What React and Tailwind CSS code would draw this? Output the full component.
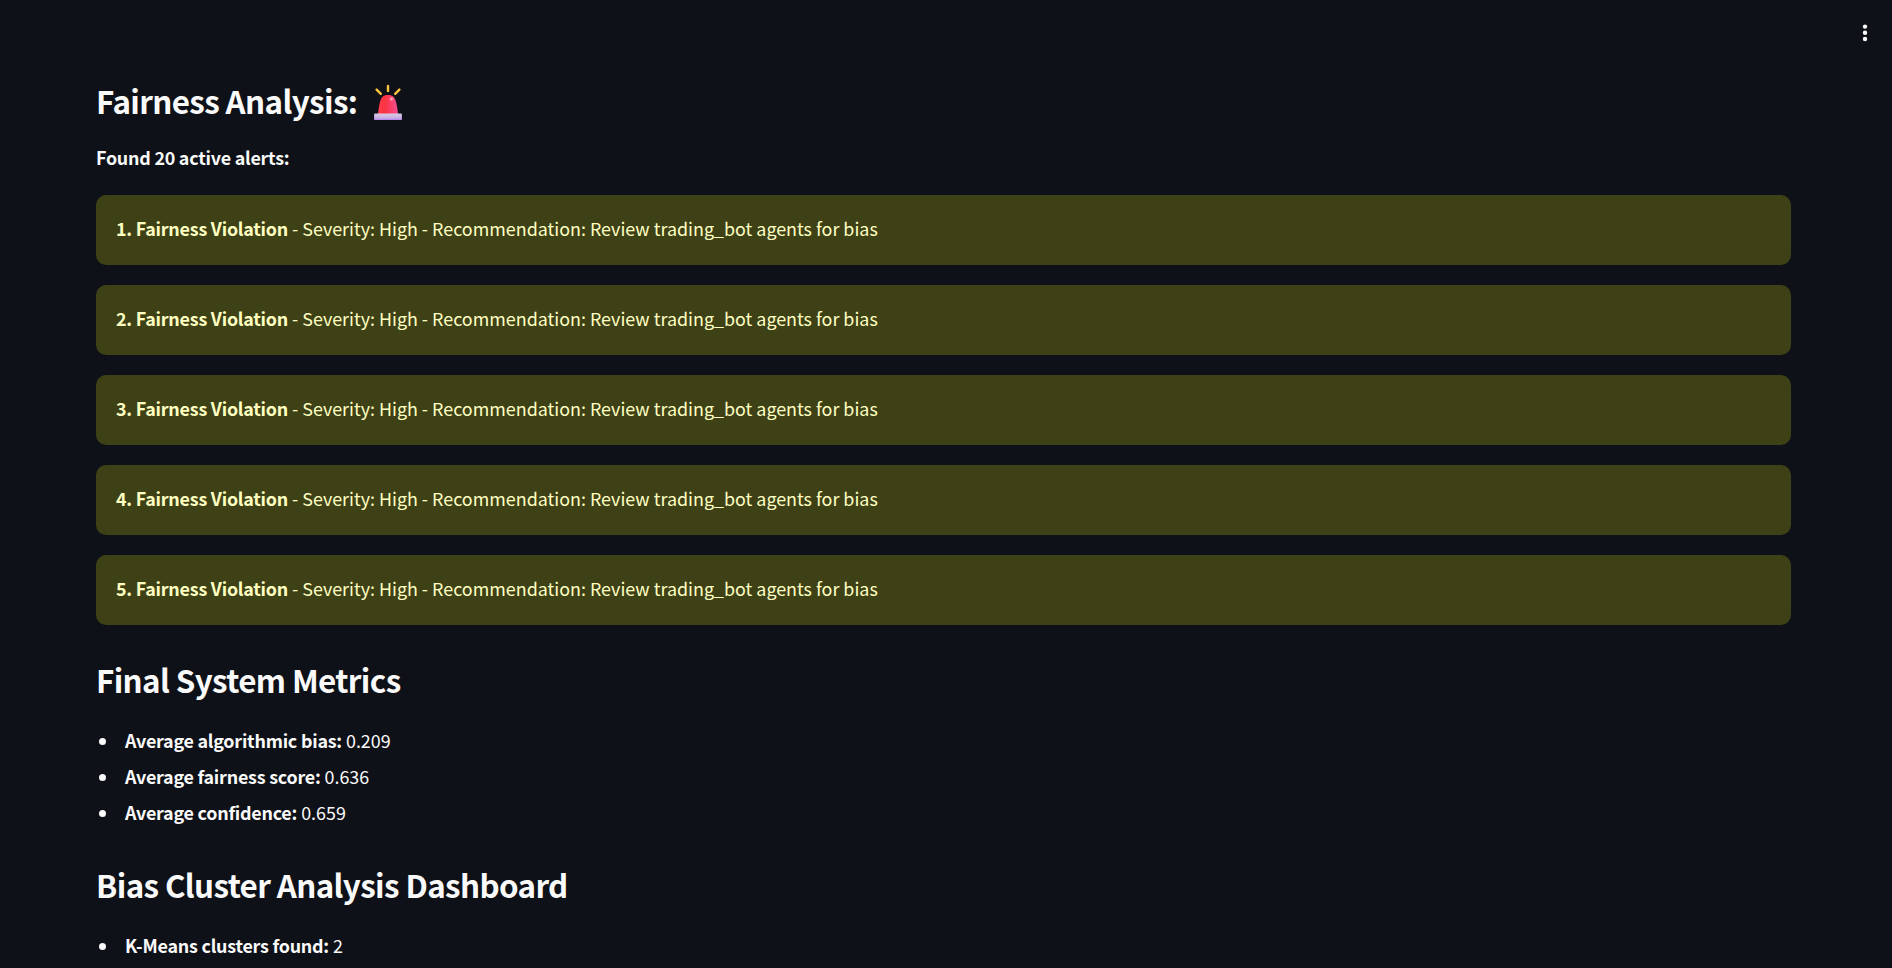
const alerts = [1, 2, 3, 4, 5];

const metrics = [
  ["Average algorithmic bias:", "0.209"],
  ["Average fairness score:", "0.636"],
  ["Average confidence:", "0.659"],
];

function Siren() {
  return (
    <svg viewBox="0 0 28 36" className="h-9 w-7" aria-hidden="true">
      <defs>
        <linearGradient id="dome" x1="0" x2="1">
          <stop offset="0" stopColor="#ff3b4e" />
          <stop offset="0.35" stopColor="#fb3340" />
          <stop offset="1" stopColor="#f54d94" />
        </linearGradient>
        <linearGradient id="base" x1="0" x2="0" y1="0" y2="1">
          <stop offset="0" stopColor="#dccbe8" />
          <stop offset="0.65" stopColor="#c8b4e2" />
          <stop offset="1" stopColor="#b57ff0" />
        </linearGradient>
        <radialGradient id="shine">
          <stop offset="0" stopColor="#ffd0d8" />
          <stop offset="1" stopColor="#ff8296" stopOpacity="0" />
        </radialGradient>
      </defs>
      <g stroke="#f9c23c" strokeWidth="2.4" strokeLinecap="round">
        <path d="M14 1.9v5" />
        <path d="M2.6 5.6l4.2 4.2" />
        <path d="M25.4 5.6l-4.2 4.2" />
      </g>
      <path d="M4 30C4.5 25 5.2 20 6.6 16 8 12.2 10.5 11 14 11s6 1.2 7.4 5C22.8 20 23.5 25 24 30z" fill="url(#dome)" />
      <ellipse cx="17.5" cy="15" rx="2.8" ry="2.6" fill="url(#shine)" />
      <path d="M1.3 29.5h25.4q1.2 0 1.2 1.2V36H.1v-5.3q0-1.2 1.2-1.2z" fill="url(#base)" />
    </svg>
  );
}

function Heading({ children }) {
  return (
    <h3 className="flex h-[43px] items-center whitespace-nowrap text-[31.35px] leading-[43px] font-semibold tracking-[-0.62px]">
      {children}
    </h3>
  );
}

function Strong({ children }) {
  return <strong className="font-semibold tracking-[-0.23px]">{children}</strong>;
}

function Item({ label, value }) {
  return (
    <li className="flex h-9 items-center whitespace-nowrap">
      <span className="mt-[3px] mr-[19px] ml-[3px] size-[7px] rounded-full bg-[#fafafa]" />
      <span className="leading-8">
        <Strong>{label}</Strong> {value}
      </span>
    </li>
  );
}

export default function App() {
  return (
    <div className="flex h-[968px] flex-col overflow-hidden bg-[#0e1117] font-['Noto_Sans_CJK_JP','Noto_Sans_CJK_SC',sans-serif] text-[17.9px] text-[#fafafa]">
      <header className="flex h-[65px] shrink-0 items-center justify-end pr-[18.5px]">
        <button aria-label="Menu" className="flex h-6 w-[18px] items-center justify-center">
          <svg viewBox="0 0 6 18" className="h-[18px] w-1.5 fill-[#fafafa]">
            <circle cx="3" cy="2.6" r="2.2" />
            <circle cx="3" cy="8.8" r="2.2" />
            <circle cx="3" cy="15" r="2.2" />
          </svg>
        </button>
      </header>
      <main className="flex flex-col pt-[14px] pr-[101px] pl-24">
        <Heading>
          <span>Fairness Analysis:</span>
          <span className="mt-0.5 ml-[17px]">
            <Siren />
          </span>
        </Heading>
        <p className="mt-[19px] h-8 leading-8">
          <Strong>Found 20 active alerts:</Strong>
        </p>
        <div className="mt-[22px] flex flex-col gap-5">
          {alerts.map((n) => (
            <div key={n} className="h-[70px] rounded-[10px] bg-[#3e4116] px-5 pt-[17px] leading-8 text-[#ffffc2]">
              <Strong>{n}. Fairness Violation</Strong> - Severity: High - Recommendation: Review trading_bot agents for
              bias
            </div>
          ))}
        </div>
        <div className="mt-[33px]">
          <Heading>Final System Metrics</Heading>
        </div>
        <ul className="mt-[21px]">
          {metrics.map(([label, value]) => (
            <Item key={label} label={label} value={value} />
          ))}
        </ul>
        <div className="mt-[33px]">
          <Heading>Bias Cluster Analysis Dashboard</Heading>
        </div>
        <ul className="mt-[21px]">
          <Item label="K-Means clusters found:" value="2" />
        </ul>
      </main>
    </div>
  );
}
